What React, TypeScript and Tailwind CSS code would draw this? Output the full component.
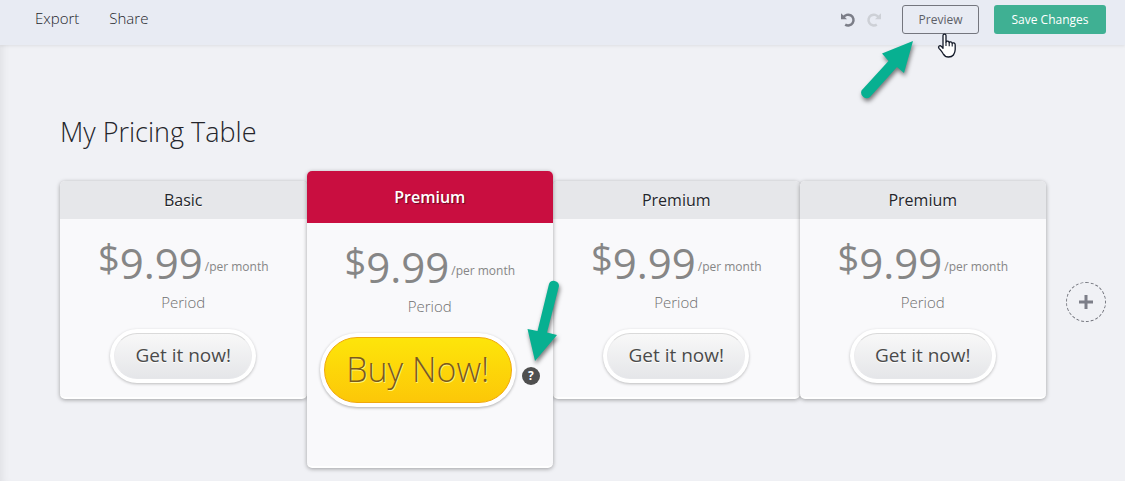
interface Plan {
  id: number
  name: string
  featured?: boolean
}

const plans: Plan[] = [
  { id: 1, name: 'Basic' },
  { id: 2, name: 'Premium', featured: true },
  { id: 3, name: 'Premium' },
  { id: 4, name: 'Premium' },
]

function UndoIcon({ className }: { className?: string }) {
  return (
    <svg viewBox="0 0 16 16" className={className} aria-hidden="true">
      <path d="M3.4 5.4A5.4 5.4 0 1 1 5.2 12.600" fill="none" stroke="currentColor" strokeWidth="2.5" />
      <path d="M1 1.2V7.2H7L5 5.3L2.9 3.1Z" fill="currentColor" />
    </svg>
  )
}

function HandCursor() {
  return (
    <svg
      viewBox="0 0 20 26"
      className="absolute left-[35px] top-7 h-[26px] w-5 pointer-events-none"
      aria-hidden="true"
    >
      <path
        d="M6 2.6C6 .6 9 .6 9 2.6V9C9.4 7.7 12 7.7 12.2 9.6C12.8 8.4 15 8.7 15.2 10.4C16 9.4 18.2 9.8 18.2 11.8V16.5C18.2 19 17.3 20.4 16.4 22C15 23.8 13.4 24 11.5 24C8.8 24 7.3 22.7 6.2 20.8C5 18.6 3.6 17.2 2 15.3C.6 13.3 2.9 11.9 4.4 13.4L6 15.2Z"
        fill="#fff"
        stroke="#111827"
        strokeWidth="1.3"
        strokeLinejoin="round"
      />
      <path d="M9 9V13M12.2 9.6V13.2M15.2 10.6V13.6" stroke="#111827" strokeWidth="1.1" fill="none" />
    </svg>
  )
}

function Toolbar() {
  return (
    <header className="flex items-center justify-between bg-[#e8ebf3] h-[45px] pb-1.5 pl-[35px] pr-[19px] shadow-[0_1px_3px_rgba(0,0,0,0.08)]">
      <nav className="flex gap-[30px] pb-1 text-[15px] leading-5 font-light text-[#24252b]">
        <a href="#export">Export</a>
        <a href="#share">Share</a>
      </nav>
      <div className="flex items-center">
        <button aria-label="Undo" className="mr-[10px] text-[#7c7e88]">
          <UndoIcon className="size-4" />
        </button>
        <button aria-label="Redo" className="mr-5 text-[#cdd0d6]" disabled>
          <UndoIcon className="size-4 -scale-x-100" />
        </button>
        <div className="relative mr-[15px]">
          <button className="h-[29px] w-[77px] rounded-[3px] border border-[#74767e] text-[12px] text-[#5d5f67]">
            Preview
          </button>
          <svg
            viewBox="855 35 64 72"
            className="absolute -left-[47px] top-[30px] h-[72px] w-16 overflow-visible pointer-events-none drop-shadow-[1px_3px_2px_rgba(0,0,0,0.5)]"
            aria-hidden="true"
          >
            <path d="M913 41L904 73L897 67L870 97A5.6 5.6 0 0 1 861.5 90.5L888.5 61L882 53.5Z" fill="#07b091" />
          </svg>
          <HandCursor />
        </div>
        <button className="h-[29px] w-28 rounded-[3px] bg-[#3fb093] text-[12px] font-medium text-white">
          Save Changes
        </button>
      </div>
    </header>
  )
}

function PlanCard({ plan }: { plan: Plan }) {
  return (
    <article
      className={`relative rounded-[5px] border-b-2 border-white bg-[#f9f9fb] shadow-[0_1px_4px_rgba(0,0,0,0.35)] ${
        plan.featured ? 'z-10 -mt-2.5 pb-[59px]' : 'pb-[14px]'
      }`}
    >
      <h2
        className={`flex items-center justify-center rounded-t-[5px] text-[16px] ${
          plan.featured
            ? 'h-[52px] bg-[#c90e40] font-semibold text-white [text-shadow:1px_1px_1px_rgba(0,0,0,0.5)]'
            : 'h-[38px] bg-[#e6e7ea] font-medium text-[#24252b] [text-shadow:0_1px_0_#fff]'
        }`}
      >
        {plan.name}
      </h2>

      <div className="mt-5 flex h-[50px] items-start justify-center text-[#868686]">
        <span className="text-[38px] leading-[36px]">$</span>
        <span className="mt-1 text-[42px] leading-[40px]">9.99</span>
        <span className="mt-[18px] ml-0.5 text-[12px] leading-5 font-medium">/per month</span>
      </div>
      <p className="mt-[3px] text-center text-[15px] leading-5 font-light text-[#6f6f6f]">Period</p>

      {plan.featured ? (
        <div className="mt-[17px] flex items-center justify-center gap-1.5">
          <button className="h-[74px] w-[196px] rounded-full bg-white p-1 shadow-[0_1px_3px_rgba(0,0,0,0.3)]">
            <span className="flex h-full items-center justify-center rounded-full border border-[#f0a80c] bg-linear-to-b from-[#fde50a] to-[#fcc708] pb-0.5 text-[34px] font-light text-[#7a5a1c] [text-shadow:1px_1px_0_#fff27a]">
              Buy Now!
            </span>
          </button>
          <button
            aria-label="Help"
            className="mt-3 flex size-[18px] items-center justify-center rounded-full bg-[#4f4f4f] text-[12px] font-bold text-white"
          >
            ?
          </button>
          <svg
            viewBox="524 276 38 90"
            className="absolute right-[-9px] top-[105px] h-[90px] w-[38px] overflow-visible pointer-events-none drop-shadow-[1px_3px_2px_rgba(0,0,0,0.5)]"
            aria-hidden="true"
          >
            <path d="M535 361L527.5 329L537.5 331L549 284A5.2 5.2 0 0 1 559 286L547 332.5L557 335Z" fill="#07b091" />
          </svg>
        </div>
      ) : (
        <div className="mt-[17px] flex justify-center">
          <button className="h-[54px] w-[146px] rounded-full bg-white p-1 shadow-[0_1px_3px_rgba(0,0,0,0.25)]">
            <span className="flex h-full items-center justify-center rounded-full border border-t-[#dadada] border-x-[#ececee] border-b-[#e6e7ea] bg-linear-to-b from-[#f8f8f8] to-[#e5e6e9] pb-0.5 text-[19px] text-[#4a4a4a] [text-shadow:0_1px_0_#fff]">
              Get it now!
            </span>
          </button>
        </div>
      )}
    </article>
  )
}

export default function App() {
  return (
    <div className="min-h-screen bg-[#f0f1f5] font-['Open_Sans','Noto_Sans',sans-serif] shadow-[inset_8px_0_8px_-6px_rgba(0,0,0,0.08)]">
      <Toolbar />
      <main className="pl-[60px] pr-[19px] pt-[71px]">
        <h1 className="text-[27px] leading-8 font-light text-[#24252b]">My Pricing Table</h1>
        <div className="mt-[33px] flex items-start gap-5">
          <div className="grid flex-1 grid-cols-4 items-start">
            {plans.map(plan => (
              <PlanCard key={plan.id} plan={plan} />
            ))}
          </div>
          <button
            aria-label="Add column"
            className="mt-[101px] flex size-10 items-center justify-center rounded-full border border-dashed border-[#74767e] text-[#7c7e88]"
          >
            <svg viewBox="0 0 14 14" className="size-3.5" aria-hidden="true">
              <path d="M7 0V14M0 7H14" stroke="currentColor" strokeWidth="3" />
            </svg>
          </button>
        </div>
      </main>
    </div>
  )
}
